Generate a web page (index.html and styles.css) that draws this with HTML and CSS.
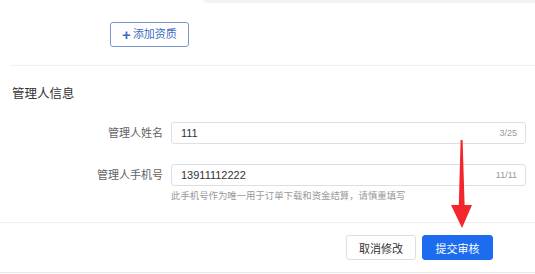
FILE: index.html
```html
<!DOCTYPE html>
<html lang="zh-CN">
<head>
    <meta charset="UTF-8">
    <meta name="viewport" content="width=device-width, initial-scale=1.0">
    <title>管理人信息</title>
    <link rel="stylesheet" href="styles.css">
</head>
<body>
    <div class="page">
        <div class="top-strip"></div>

        <div class="add-row">
            <button class="btn-add"><span class="plus">+</span>添加资质</button>
        </div>

        <div class="section">
            <h3 class="section-title">管理人信息</h3>

            <div class="form-row">
                <label class="form-label">管理人姓名</label>
                <div class="form-field">
                    <div class="input">
                        <span class="input-value">111</span>
                        <span class="input-count">3/25</span>
                    </div>
                </div>
            </div>

            <div class="form-row">
                <label class="form-label">管理人手机号</label>
                <div class="form-field">
                    <div class="input">
                        <span class="input-value">13911112222</span>
                        <span class="input-count">11/11</span>
                    </div>
                    <div class="hint">此手机号作为唯一用于订单下载和资金结算，请慎重填写</div>
                </div>
            </div>
        </div>

        <div class="actions">
            <button class="btn btn-default">取消修改</button>
            <button class="btn btn-primary">提交审核</button>
        </div>

        <!-- annotation arrow drawn over the form -->
        <svg class="arrow" width="535" height="274" viewBox="0 0 535 274">
            <polygon points="460.6,140 462.6,140 464.6,205 472,205 462,228 451,205 458.8,205" fill="#f2262b"/>
        </svg>
    </div>
</body>
</html>
```

FILE: styles.css
```css
:root {
    --primary: #1d6cf0;
    --text: #333333;
    --text-secondary: #999999;
    --border: #dcdfe6;
}

* {
    margin: 0;
    padding: 0;
    box-sizing: border-box;
    font-family: 'Liberation Sans', 'Noto Sans CJK SC', sans-serif;
}

body {
    background: #ffffff;
    color: var(--text);
}

.page {
    position: relative;
    width: 535px;
    height: 274px;
    overflow: hidden;
}

.top-strip {
    height: 3px;
    margin-left: 203px;
    background-color: #f3f3f3;
    border-bottom-left-radius: 3px;
}

.add-row {
    margin-left: 10px;
    padding: 19px 0 18px 100px;
    border-bottom: 1px solid #f0f0f0;
}

.btn-add {
    display: flex;
    align-items: center;
    justify-content: center;
    width: 79px;
    height: 25px;
    border: 1px solid #7a98cf;
    border-radius: 3px;
    background: #ffffff;
    color: #3d6cc0;
    font-size: 11px;
    line-height: 1;
}

.plus {
    font-size: 15px;
    font-weight: bold;
    margin: -1px 2px 0 0;
}

.section {
    height: 157px;
    padding-top: 20px;
    border-bottom: 1px solid #f0f0f0;
}

.section-title {
    padding-left: 12px;
    font-size: 12.5px;
    font-weight: normal;
    line-height: 16px;
    color: #333333;
}

.form-row {
    display: flex;
    margin-top: 20px;
}

.form-label {
    width: 171px;
    padding-right: 8px;
    text-align: right;
    font-size: 11px;
    line-height: 22px;
    color: #606266;
}

.form-field {
    width: 355px;
}

.input {
    display: flex;
    justify-content: space-between;
    align-items: center;
    height: 22px;
    border: 1px solid var(--border);
    border-radius: 3px;
    padding: 0 8px 0 9px;
}

.input-value {
    font-size: 11px;
    color: #333333;
}

.input-count {
    font-size: 9px;
    color: var(--text-secondary);
}

.hint {
    margin-top: 3px;
    font-size: 9.4px;
    line-height: 14px;
    color: var(--text-secondary);
}

.actions {
    display: flex;
    justify-content: flex-end;
    gap: 6px;
    height: 50px;
    padding: 12px 42px 0 0;
    border-bottom: 1px solid #e8e8e8;
}

.btn {
    width: 71px;
    height: 25px;
    border-radius: 3px;
    font-size: 11px;
    cursor: pointer;
}

.btn-default {
    width: 70px;
    background: #ffffff;
    border: 1px solid var(--border);
    color: #333333;
}

.btn-primary {
    background: var(--primary);
    border: 1px solid var(--primary);
    color: #ffffff;
}

.arrow {
    position: absolute;
    left: 0;
    top: 0;
    pointer-events: none;
}
```
